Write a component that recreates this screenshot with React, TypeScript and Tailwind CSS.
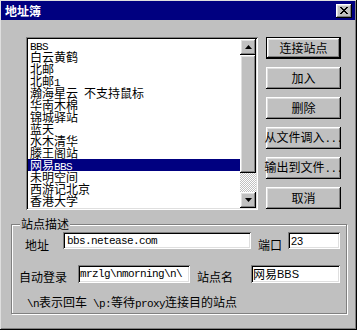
import React from "react";

const raised =
  "shadow-[inset_-1px_-1px_0_#000,inset_1px_1px_0_#fff,inset_-2px_-2px_0_#808080,inset_2px_2px_0_#dfdfdf]";
const sunken =
  "shadow-[inset_1px_1px_0_#808080,inset_-1px_-1px_0_#fff,inset_2px_2px_0_#000,inset_-2px_-2px_0_#dfdfdf]";

// ascii in the dialog font is half width (6px per char)
function A({ children }: { children: React.ReactNode }) {
  return (
    <span className="font-['Liberation_Mono',monospace] text-[11px] tracking-[-0.6px]">
      {children}
    </span>
  );
}

function S({ children }: { children: React.ReactNode }) {
  return <span className="font-['Liberation_Sans',sans-serif] text-[11px]">{children}</span>;
}

const sites: React.ReactNode[] = [
  <A>BBS</A>,
  "白云黄鹤",
  "北邮",
  <>北邮<A>1</A></>,
  <>瀚海星云<A> </A>不支持鼠标</>,
  "华南木棉",
  "锦城驿站",
  "蓝天",
  "水木清华",
  "滕王阁站",
  <>网易<A>BBS</A></>,
  "未明空间",
  "西游记北京",
  "香港大学",
];

function Arrow({ up }: { up?: boolean }) {
  return (
    <svg width="7" height="4" viewBox="0 0 7 4" className="block">
      <path d={up ? "M3.5 0 L7 4 L0 4 Z" : "M0 0 L7 0 L3.5 4 Z"} fill="#000" />
    </svg>
  );
}

function Btn({ label, def }: { label: React.ReactNode; def?: boolean }) {
  return (
    <div
      className={`w-[75px] h-[22px] flex items-center justify-center ${
        def ? "border border-black" : ""
      }`}
    >
      <div className={`w-full h-full flex items-center justify-center ${raised}`}>{label}</div>
    </div>
  );
}

export default function App() {
  return (
    <div className="relative w-[357px] h-[330px] overflow-hidden bg-[#c0c0c0] text-[12px] leading-[12px] text-black font-['Noto_Sans_CJK_SC',sans-serif] shadow-[inset_-1px_-1px_0_#000,inset_1px_1px_0_#dfdfdf,inset_-2px_-2px_0_#808080]">
      {/* title bar */}
      <div className="ml-[1px] mt-[1px] w-[354px] h-[19px] bg-[#000080] flex items-center justify-between">
        <span className="ml-[4px] text-white font-bold text-[12px]">地址簿</span>
        <div className={`mr-[3px] w-4 h-[14px] bg-[#c0c0c0] flex items-center justify-center ${raised}`}>
          <svg width="8" height="7" viewBox="0 0 8 7" className="block">
            <path
              d="M0 0h2v1h1v1h2v-1h1v-1h2v1h-1v1h-1v1h-1v1h1v1h1v1h1v1h-2v-1h-1v-1h-2v1h-1v1h-2v-1h1v-1h1v-1h1v-1h-1v-1h-1v-1h-1z"
              fill="#000"
            />
          </svg>
        </div>
      </div>

      {/* list + buttons */}
      <div className="flex mt-[17px] ml-[26px]">
        <div className={`w-[232px] h-[173px] bg-white p-[2px] flex ${sunken}`}>
          <div className="flex-1 overflow-hidden">
            {sites.map((s, i) => (
              <div
                key={i}
                className={`h-[12px] pl-[2px] whitespace-nowrap ${
                  i === 10 ? "bg-[#000080] text-white" : ""
                }`}
              >
                {s}
              </div>
            ))}
          </div>
          <div className="w-4 flex flex-col">
            <div className={`h-4 bg-[#c0c0c0] flex items-center justify-center ${raised}`}>
              <Arrow up />
            </div>
            <div className={`h-[118px] bg-[#c0c0c0] ${raised}`} />
            <div className="flex-1 bg-[repeating-conic-gradient(#fff_0_25%,#c0c0c0_0_50%)] bg-[length:2px_2px]" />
            <div className={`h-4 bg-[#c0c0c0] flex items-center justify-center ${raised}`}>
              <Arrow />
            </div>
          </div>
        </div>

        <div className="ml-[8px] flex flex-col gap-[8px]">
          <Btn def label="连接站点" />
          <Btn label="加入" />
          <Btn label="删除" />
          <Btn label={<span className="whitespace-nowrap">从文件调入<A>...</A></span>} />
          <Btn label={<span className="whitespace-nowrap">输出到文件<A>...</A></span>} />
          <Btn label="取消" />
        </div>
      </div>

      {/* group box */}
      <div className="relative mt-[14px] ml-[11px] w-[336px] h-[90px] border border-[#808080] shadow-[inset_1px_1px_0_#fff,1px_1px_0_#fff]">
        <span className="absolute left-[8px] top-[-7px] bg-[#c0c0c0] px-[1px]">站点描述</span>

        <div className="flex items-start pt-[7px] pl-[13px]">
          <span className="mt-[7px] w-[24px]">地址</span>
          <div className={`ml-[14px] w-[188px] h-[17px] bg-white pl-[4px] flex items-center ${sunken}`}>
            <A>bbs.netease.com</A>
          </div>
          <span className="ml-[7px] mt-[7px] w-[24px]">端口</span>
          <div className={`ml-[6px] w-[52px] h-[17px] bg-white pl-[3px] flex items-center ${sunken}`}>
            <S>23</S>
          </div>
        </div>

        <div className="flex items-start mt-[14px] pl-[7px]">
          <span className="mt-[6px] w-[48px]">自动登录</span>
          <div
            className={`ml-[11px] w-[112px] h-[18px] bg-white pl-[2px] pr-[2px] flex items-center overflow-hidden whitespace-nowrap ${sunken}`}
          >
            <A>mrzlg\nmorning\n\</A>
          </div>
          <span className="ml-[7px] mt-[6px] w-[36px]">站点名</span>
          <div className={`ml-[18px] w-[89px] h-[18px] bg-white pl-[2px] flex items-center ${sunken}`}>
            <span>网易</span>
            <S>BBS</S>
          </div>
        </div>

        <div className="mt-[13px] pl-[15px] whitespace-nowrap">
          <A>\n</A>表示回车<A> \p:</A>等待<A>proxy</A>连接目的站点
        </div>
      </div>
    </div>
  );
}
